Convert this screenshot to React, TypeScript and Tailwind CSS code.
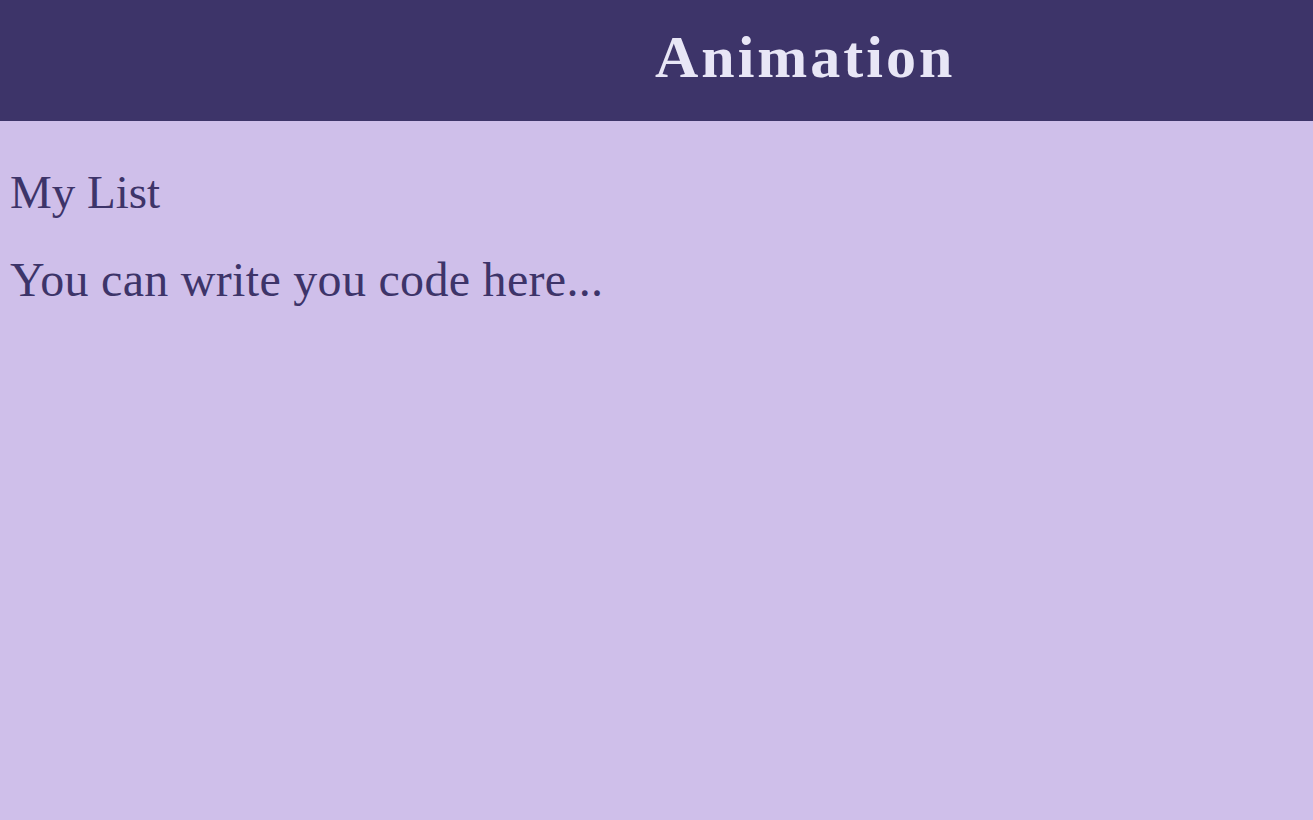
export default function App() {
  return (
    <div className="min-h-[820px] bg-[#cfbfea] font-['Liberation_Serif',serif]">
      <header className="flex h-[121px] items-center bg-[#3d3469]">
        <div className="w-[655px]" />
        <h1 className="mb-[8px] text-[60px] leading-none font-bold tracking-[3px] text-[#e8e6f6]">Animation</h1>
      </header>
      <main className="px-[10px] pt-[43px] text-[#3d3469]">
        <h2 className="text-[47px] leading-[56px]">My List</h2>
        <p className="mt-[32px] text-[48px] leading-[56px] tracking-[0.3px]">You can write you code here...</p>
      </main>
    </div>
  );
}
